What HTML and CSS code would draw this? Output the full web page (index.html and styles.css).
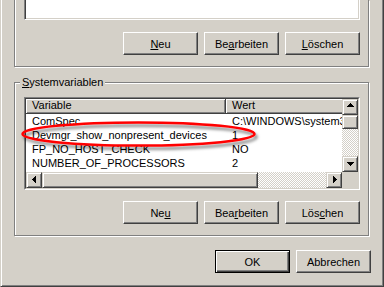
FILE: index.html
```html
<!DOCTYPE html>
<html lang="de">
<head>
    <meta charset="UTF-8">
    <title>Umgebungsvariablen</title>
    <link rel="stylesheet" href="styles.css">
</head>
<body>
    <div class="dialog">
        <!-- Benutzervariablen (oben abgeschnitten) -->
        <div class="group group-cut">
            <div class="listbox"></div>
            <div class="button-row">
                <button class="btn"><u>N</u>eu</button>
                <button class="btn">Be<u>a</u>rbeiten</button>
                <button class="btn"><u>L</u>öschen</button>
            </div>
        </div>

        <!-- Systemvariablen -->
        <div class="group group-sys">
            <span class="group-label"><u>S</u>ystemvariablen</span>
            <div class="listview">
                <div class="lv-frame">
                    <div class="lv-body">
                        <div class="lv-header">
                            <div class="lv-col col-name">Variable</div>
                            <div class="lv-col col-value">Wert</div>
                        </div>
                        <div class="lv-row"><div class="col-name">ComSpec</div><div class="col-value">C:\WINDOWS\system32\cmd.exe</div></div>
                        <div class="lv-row"><div class="col-name">Devmgr_show_nonpresent_devices</div><div class="col-value">1</div></div>
                        <div class="lv-row"><div class="col-name">FP_NO_HOST_CHECK</div><div class="col-value">NO</div></div>
                        <div class="lv-row"><div class="col-name">NUMBER_OF_PROCESSORS</div><div class="col-value">2</div></div>
                    </div>
                    <div class="vscroll">
                        <div class="sb-btn"><svg class="arrow arrow-up" width="7" height="4"><path d="M3 0h1v1h1v1h1v1h1v1H0V3h1V2h1V1h1Z"/></svg></div>
                        <div class="sb-thumb"></div>
                        <div class="sb-track"></div>
                        <div class="sb-btn"><svg class="arrow arrow-down" width="7" height="4"><path d="M0 0h7v1h-1v1h-1v1h-1v1h-1v-1h-1v-1h-1v-1h-1Z"/></svg></div>
                    </div>
                    <div class="hscroll">
                        <div class="sb-btn"><svg class="arrow arrow-left" width="4" height="7"><path d="M3 0h1v7h-1v-1h-1v-1h-1v-1h-1v-1h1v-1h1v-1h1Z"/></svg></div>
                        <div class="sb-thumb"></div>
                        <div class="sb-track"></div>
                        <div class="sb-btn"><svg class="arrow arrow-right" width="4" height="7"><path d="M0 0h1v1h1v1h1v1h1v1h-1v1h-1v1h-1v1h-1Z"/></svg></div>
                    </div>
                    <div class="sb-corner"></div>
                </div>
            </div>
            <div class="button-row">
                <button class="btn">Ne<u>u</u></button>
                <button class="btn">Bea<u>r</u>beiten</button>
                <button class="btn">Lös<u>c</u>hen</button>
            </div>
        </div>

        <div class="dialog-buttons">
            <button class="btn btn-default">OK</button>
            <button class="btn">Abbrechen</button>
        </div>

        <!-- rote Markierung -->
        <svg class="markup" width="384" height="287" viewBox="0 0 384 287">
            <defs>
                <filter id="shadow" x="-10%" y="-60%" width="120%" height="220%">
                    <feDropShadow dx="2" dy="3" stdDeviation="1.5" flood-color="#000" flood-opacity="0.5"/>
                </filter>
            </defs>
            <ellipse cx="138.5" cy="134" rx="116" ry="11.5" fill="none" stroke="#f00" stroke-width="2.5" filter="url(#shadow)"/>
        </svg>
    </div>
</body>
</html>
```

FILE: styles.css
```css
body {
    margin: 0;
    background: #d4d0c8;
    font-family: "Liberation Sans", Arial, sans-serif;
    font-size: 11px;
    color: #000;
}
.dialog {
    position: relative;
    width: 384px;
    height: 287px;
    box-sizing: border-box;
    border-left: 1px solid #d4d0c8;
    border-right: 1px solid #404040;
    border-bottom: 1px solid #404040;
    box-shadow: inset 1px 0 #fff, inset -1px -1px #808080;
    padding: 0 12px 0 13px;
    overflow: hidden;
}
.group {
    position: relative;
    margin-right: 2px;
    border: 1px solid #808080;
    box-shadow: 1px 1px 0 #fff, inset 1px 1px 0 #fff;
    padding: 14px 8px 11px 9px;
}
.group-cut {
    border-top: none;
    box-shadow: 1px 1px 0 #fff, inset 1px 0 0 #fff;
    padding-top: 0;
}
.group-sys {
    margin-top: 15px;
}
.group-label {
    position: absolute;
    top: -7px;
    left: 5px;
    padding: 0 2px;
    line-height: 13px;
    background: #d4d0c8;
}
.listbox {
    height: 20px;
    box-sizing: border-box;
    background: #fff;
    border: 1px solid;
    border-color: #808080 #fff #fff #808080;
    border-top: none;
    box-shadow: inset 1px 0 #404040, inset -1px -1px #d4d0c8;
}
.button-row {
    display: flex;
    justify-content: flex-end;
    gap: 6px;
    margin-top: 12px;
}
.group-sys .button-row {
    margin-top: 11px;
}
.dialog-buttons {
    display: flex;
    justify-content: flex-end;
    gap: 6px;
    margin-top: 14px;
}
.btn {
    width: 75px;
    height: 23px;
    box-sizing: border-box;
    margin: 0;
    padding: 0;
    font: inherit;
    color: #000;
    background: #d4d0c8;
    border: 1px solid;
    border-color: #fff #404040 #404040 #fff;
    border-radius: 0;
    box-shadow: inset -1px -1px #808080;
}
.btn-default {
    border-color: #000;
    box-shadow: inset 1px 1px #fff, inset -1px -1px #404040, inset -2px -2px #808080;
}

/* Listenansicht */
.listview {
    width: 336px;
    height: 93px;
    box-sizing: border-box;
    border: 1px solid;
    border-color: #808080 #fff #fff #808080;
}
.lv-frame {
    height: 100%;
    box-sizing: border-box;
    border: 1px solid;
    border-color: #404040 #d4d0c8 #d4d0c8 #404040;
    background: #fff;
    display: grid;
    grid-template-columns: 1fr 16px;
    grid-template-rows: 1fr 16px;
}
.lv-body {
    overflow: hidden;
    white-space: nowrap;
}
.lv-header {
    display: flex;
    height: 15px;
}
.lv-col {
    height: 15px;
    line-height: 13px;
    background: #d4d0c8;
    border-right: 1px solid #404040;
    border-bottom: 1px solid #404040;
    box-shadow: inset 1px 1px #fff, inset -1px -1px #808080;
}
.lv-row {
    display: flex;
    height: 14px;
    line-height: 14px;
}
.col-name,
.col-value {
    flex: none;
    width: 200px;
    box-sizing: border-box;
    padding-left: 6px;
    overflow: hidden;
}

/* Bildlaufleisten */
.vscroll {
    display: flex;
    flex-direction: column;
}
.hscroll {
    display: flex;
}
.sb-btn,
.sb-thumb {
    flex: none;
    box-sizing: border-box;
    background: #d4d0c8;
    border: 1px solid;
    border-color: #d4d0c8 #404040 #404040 #d4d0c8;
    box-shadow: inset 1px 1px #fff, inset -1px -1px #808080;
}
.sb-btn {
    width: 16px;
    height: 16px;
}
.vscroll .sb-thumb {
    height: 14px;
}
.hscroll .sb-thumb {
    width: 216px;
}
.sb-track {
    flex: 1;
    background: repeating-conic-gradient(#d4d0c8 0 25%, #fff 0 50%) 0 0 / 2px 2px;
}
.sb-corner {
    background: #d4d0c8;
}
.arrow {
    display: block;
    fill: #000;
}
.arrow-up { margin: 3px 0 0 4px; }
.arrow-down { margin: 5px 0 0 4px; }
.arrow-left { margin: 3px 0 0 5px; }
.arrow-right { margin: 3px 0 0 6px; }

.markup {
    position: absolute;
    left: -1px;
    top: 0;
    pointer-events: none;
}
```
